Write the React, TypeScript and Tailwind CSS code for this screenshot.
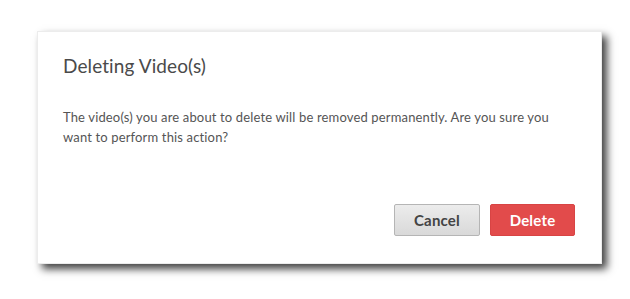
export default function App() {
    return (
        <div className="w-[630px] h-[299px] bg-white pt-[31px] pl-[37px]" style={{ fontFamily: 'Lato, "Liberation Sans", sans-serif' }}>
            <div className="w-[565px] h-[233px] bg-white border border-[#ececec] shadow-[5px_5px_8px_rgba(0,0,0,0.75)] flex flex-col">
                <h2 className="pl-[25px] pt-[22px] text-[19px] leading-[24px] tracking-[0.1px] text-[#4a4a4a]">Deleting Video(s)</h2>
                <p className="pl-[25px] pr-[30px] mt-[29px] text-[13px] leading-[20px] tracking-[0.15px] text-[#555]">
                    The video(s) you are about to delete will be removed permanently. Are you sure you want to perform this action?
                </p>
                <div className="mt-auto mb-[27px] mr-[26px] flex justify-end gap-[10px]">
                    <button className="w-[86px] h-[32px] rounded-[2px] border border-[#b5b5b5] bg-gradient-to-b from-[#ececec] to-[#d9d9d9] text-[15px] font-bold tracking-[0.2px] text-[#444]">
                        Cancel
                    </button>
                    <button className="w-[85px] h-[32px] rounded-[2px] border border-[#d84444] bg-[#e24b4b] text-[15px] font-bold tracking-[0.2px] text-white">
                        Delete
                    </button>
                </div>
            </div>
        </div>
    );
}
